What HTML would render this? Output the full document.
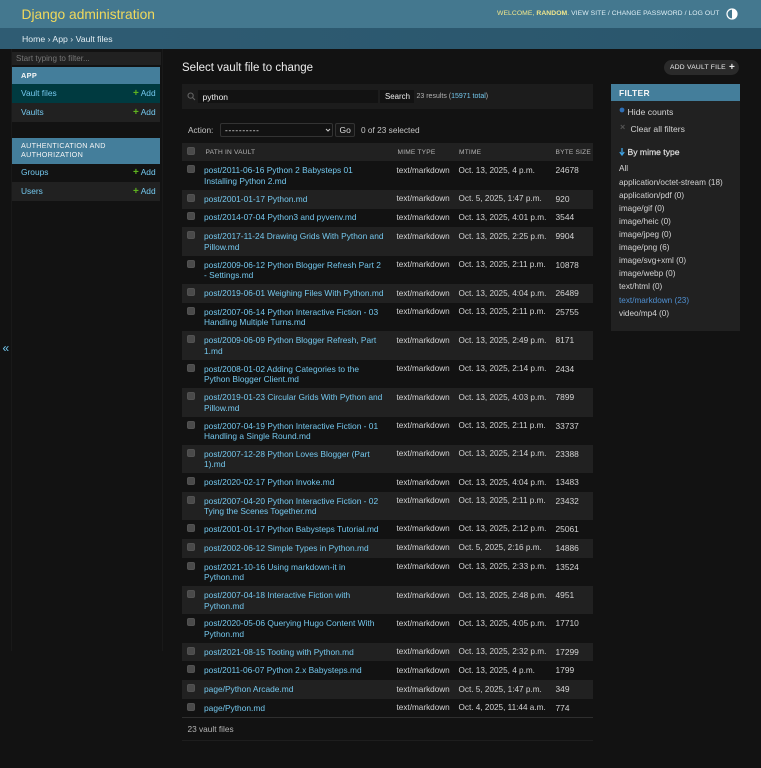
<!DOCTYPE html>
<html><head><meta charset="utf-8"><title>Select vault file to change</title>
<style>
html,body{margin:0;padding:0;background:#121212}
body{width:761px;height:768px;position:relative;overflow:hidden;font-family:"Liberation Sans",sans-serif;font-size:8.4px;color:#eee}
#w{position:absolute;left:0;top:0;width:761px;height:768px;filter:blur(.3px)}
.a{position:absolute;white-space:nowrap}
a{color:#74c8ee;text-decoration:none}
.add{color:#74c8ee}
.plus{color:#5fb41f;font-weight:bold;font-size:10px;line-height:8px}
.cb{position:absolute;left:187px;width:6px;height:6px;background:#4a4a4a;border:1px solid #525252;border-radius:2px;box-sizing:content-box}
.row{position:absolute;left:182px;width:411px}
.row.e{background:#212121}
.row a,.row span{position:absolute;line-height:10.500px}
.p{left:22px;white-space:nowrap;top:4px}
.m{left:214.500px;top:4.500px;color:#d4d4d4;white-space:nowrap;font-size:8.200px}
.t{left:276.500px;top:4.500px;color:#d4d4d4;white-space:nowrap;font-size:8.200px}
.b{left:373.500px;top:4px;color:#d4d4d4;white-space:nowrap}
.row .cb{left:5px;top:4px}
.th{position:absolute;top:148px;font-size:6.600px;color:#b4b4b4;letter-spacing:.2px;white-space:nowrap;line-height:9px}
.f{position:absolute;left:619px;font-size:8.200px;color:#d4d4d4;white-space:nowrap;line-height:10px}
</style></head><body><div id="w">
<div class="a" style="left:0;top:0;width:761px;height:28px;background:#44788f"></div>
<div class="a" style="left:0;top:28px;width:761px;height:21px;background:linear-gradient(90deg,#2f5c73,#2a566c)"></div>
<div class="a" style="left:21.500px;top:6px;font-size:13.800px;line-height:17px;color:#f0d95c">Django administration</div>
<div class="a" style="left:497px;top:9.500px;font-size:6.800px;line-height:8px;letter-spacing:.05px;color:#f0e68c">WELCOME, <b>RANDOM</b>. <span style="color:#ddeef5">VIEW SITE / CHANGE PASSWORD / LOG OUT</span></div>
<svg class="a" style="left:726px;top:8px" width="12" height="12" viewBox="0 0 12 12"><circle cx="6" cy="6" r="5" fill="none" stroke="#fff" stroke-width="1.200"/><path d="M6 1a5 5 0 0 1 0 10z" fill="#fff"/></svg>
<div class="a" style="left:22px;top:34px;font-size:8.700px;line-height:10px;color:#e3eef3">Home › App › Vault files</div>

<div class="a" style="left:11px;top:49px;width:150px;height:602px;border-right:1px solid #191919;border-left:1px solid #191919;box-sizing:content-box"></div>
<div class="a" style="left:12px;top:52px;width:149px;height:13px;background:#212121"></div>
<div class="a" style="left:16px;top:54px;font-size:8.100px;line-height:10px;color:#777">Start typing to filter...</div>
<div class="a" style="left:12px;top:67px;width:148px;height:17px;background:#447e9b"></div>
<div class="a" style="left:21px;top:71px;font-size:7.400px;line-height:9px;letter-spacing:.3px;font-weight:bold;color:#f5f5f5">APP</div>
<div class="a" style="left:12px;top:84px;width:148px;height:19px;background:#003a40"></div>
<div class="a" style="left:12px;top:103px;width:148px;height:19px;background:#212121"></div>
<a class="a" style="left:21px;top:88px;line-height:11px">Vault files</a>
<a class="a" style="left:21px;top:107px;line-height:11px">Vaults</a>
<div class="a" style="left:133px;top:88px;line-height:11px"><span class="plus">+</span> <span class="add">Add</span></div>
<div class="a" style="left:133px;top:107px;line-height:11px"><span class="plus">+</span> <span class="add">Add</span></div>
<div class="a" style="left:12px;top:138px;width:148px;height:26px;background:#447e9b"></div>
<div class="a" style="left:21px;top:142px;font-size:7.200px;line-height:8.500px;letter-spacing:.3px;color:#f5f5f5">AUTHENTICATION AND<br>AUTHORIZATION</div>
<div class="a" style="left:12px;top:182px;width:148px;height:19px;background:#212121"></div>
<a class="a" style="left:21px;top:167px;line-height:11px">Groups</a>
<a class="a" style="left:21px;top:186px;line-height:11px">Users</a>
<div class="a" style="left:133px;top:167px;line-height:11px"><span class="plus">+</span> <span class="add">Add</span></div>
<div class="a" style="left:133px;top:186px;line-height:11px"><span class="plus">+</span> <span class="add">Add</span></div>
<div class="a" style="left:2.500px;top:342px;font-size:12px;line-height:13px;color:#74c8ee">«</div>

<div class="a" style="left:182px;top:60.500px;font-size:11.500px;line-height:15px;color:#ececec">Select vault file to change</div>
<div class="a" style="left:664px;top:60px;width:75px;height:15px;background:#2a2a2a;border-radius:8px"></div>
<div class="a" style="left:670px;top:62.500px;font-size:6.700px;line-height:9px;letter-spacing:.25px;color:#eee">ADD VAULT FILE</div>
<div class="a" style="left:729px;top:60.500px;font-size:10px;line-height:13px;font-weight:bold;color:#eee">+</div>

<div class="a" style="left:182px;top:84px;width:411px;height:25px;background:#1c1c1c"></div>
<svg class="a" style="left:187px;top:92px" width="9" height="9" viewBox="0 0 9 9"><circle cx="3.600" cy="3.600" r="2.600" fill="none" stroke="#666" stroke-width="1"/><path d="M5.600 5.600L8 8" stroke="#666" stroke-width="1"/></svg>
<div class="a" style="left:198px;top:90px;width:180px;height:13px;background:#121212"></div>
<div class="a" style="left:202.500px;top:92px;font-size:8.500px;line-height:10px;color:#eee">python</div>
<div class="a" style="left:380px;top:90px;width:34px;height:13px;background:#121212"></div>
<div class="a" style="left:385px;top:92px;font-size:7.900px;line-height:10px;color:#eee">Search</div>
<div class="a" style="left:416.500px;top:91.500px;font-size:7px;line-height:9px;color:#b4b4b4">23 results (<span style="color:#74c8ee">15971 total</span>)</div>

<div class="a" style="left:188px;top:125px;font-size:8.300px;line-height:10px;color:#c4c4c4">Action:</div>
<div class="a" style="left:220px;top:123px;width:113px;height:14px;background:#121212;border:1px solid #333;border-radius:2px;box-sizing:border-box"></div>
<div class="a" style="left:225px;top:125px;font-size:8.300px;line-height:10px;letter-spacing:.7px;color:#eee">----------</div>
<svg class="a" style="left:325px;top:128px" width="6" height="5" viewBox="0 0 6 5"><path d="M1 1l2 2 2-2" fill="none" stroke="#ccc" stroke-width="1"/></svg>
<div class="a" style="left:335px;top:123px;width:20px;height:14px;background:#161616;border:1px solid #333;border-radius:2px;box-sizing:border-box"></div>
<div class="a" style="left:339.500px;top:125px;font-size:8.500px;line-height:10px;color:#ddd">Go</div>
<div class="a" style="left:361px;top:125px;font-size:8.300px;line-height:10px;color:#c4c4c4">0 of 23 selected</div>

<div class="a" style="left:182px;top:143px;width:411px;height:18px;background:#212121"></div>
<div class="cb" style="top:147px"></div>
<div class="th" style="left:205.500px">PATH IN VAULT</div>
<div class="th" style="left:397.500px">MIME TYPE</div>
<div class="th" style="left:459px">MTIME</div>
<div class="th" style="left:555.500px">BYTE SIZE</div>

<div class="row" style="top:161px;height:28.500px"><i class="cb"></i><a class="p">post/2011-06-16 Python 2 Babysteps 01<br>Installing Python 2.md</a><span class="m">text/markdown</span><span class="t">Oct. 13, 2025, 4 p.m.</span><span class="b">24678</span></div>
<div class="row e" style="top:189.500px;height:19px"><i class="cb"></i><a class="p">post/2001-01-17 Python.md</a><span class="m">text/markdown</span><span class="t">Oct. 5, 2025, 1:47 p.m.</span><span class="b">920</span></div>
<div class="row" style="top:208px;height:19px"><i class="cb"></i><a class="p">post/2014-07-04 Python3 and pyvenv.md</a><span class="m">text/markdown</span><span class="t">Oct. 13, 2025, 4:01 p.m.</span><span class="b">3544</span></div>
<div class="row e" style="top:227px;height:28.500px"><i class="cb"></i><a class="p">post/2017-11-24 Drawing Grids With Python and<br>Pillow.md</a><span class="m">text/markdown</span><span class="t">Oct. 13, 2025, 2:25 p.m.</span><span class="b">9904</span></div>
<div class="row" style="top:255.500px;height:28.500px"><i class="cb"></i><a class="p">post/2009-06-12 Python Blogger Refresh Part 2<br>- Settings.md</a><span class="m">text/markdown</span><span class="t">Oct. 13, 2025, 2:11 p.m.</span><span class="b">10878</span></div>
<div class="row e" style="top:284px;height:18.500px"><i class="cb"></i><a class="p">post/2019-06-01 Weighing Files With Python.md</a><span class="m">text/markdown</span><span class="t">Oct. 13, 2025, 4:04 p.m.</span><span class="b">26489</span></div>
<div class="row" style="top:302.500px;height:28.500px"><i class="cb"></i><a class="p">post/2007-06-14 Python Interactive Fiction - 03<br>Handling Multiple Turns.md</a><span class="m">text/markdown</span><span class="t">Oct. 13, 2025, 2:11 p.m.</span><span class="b">25755</span></div>
<div class="row e" style="top:331px;height:28.500px"><i class="cb"></i><a class="p">post/2009-06-09 Python Blogger Refresh, Part<br>1.md</a><span class="m">text/markdown</span><span class="t">Oct. 13, 2025, 2:49 p.m.</span><span class="b">8171</span></div>
<div class="row" style="top:359.500px;height:28.500px"><i class="cb"></i><a class="p">post/2008-01-02 Adding Categories to the<br>Python Blogger Client.md</a><span class="m">text/markdown</span><span class="t">Oct. 13, 2025, 2:14 p.m.</span><span class="b">2434</span></div>
<div class="row e" style="top:388px;height:28.500px"><i class="cb"></i><a class="p">post/2019-01-23 Circular Grids With Python and<br>Pillow.md</a><span class="m">text/markdown</span><span class="t">Oct. 13, 2025, 4:03 p.m.</span><span class="b">7899</span></div>
<div class="row" style="top:416.500px;height:28px"><i class="cb"></i><a class="p">post/2007-04-19 Python Interactive Fiction - 01<br>Handling a Single Round.md</a><span class="m">text/markdown</span><span class="t">Oct. 13, 2025, 2:11 p.m.</span><span class="b">33737</span></div>
<div class="row e" style="top:444.500px;height:28.500px"><i class="cb"></i><a class="p">post/2007-12-28 Python Loves Blogger (Part<br>1).md</a><span class="m">text/markdown</span><span class="t">Oct. 13, 2025, 2:14 p.m.</span><span class="b">23388</span></div>
<div class="row" style="top:473px;height:18.500px"><i class="cb"></i><a class="p">post/2020-02-17 Python Invoke.md</a><span class="m">text/markdown</span><span class="t">Oct. 13, 2025, 4:04 p.m.</span><span class="b">13483</span></div>
<div class="row e" style="top:491.500px;height:28px"><i class="cb"></i><a class="p">post/2007-04-20 Python Interactive Fiction - 02<br>Tying the Scenes Together.md</a><span class="m">text/markdown</span><span class="t">Oct. 13, 2025, 2:11 p.m.</span><span class="b">23432</span></div>
<div class="row" style="top:519.500px;height:19px"><i class="cb"></i><a class="p">post/2001-01-17 Python Babysteps Tutorial.md</a><span class="m">text/markdown</span><span class="t">Oct. 13, 2025, 2:12 p.m.</span><span class="b">25061</span></div>
<div class="row e" style="top:538.500px;height:19px"><i class="cb"></i><a class="p">post/2002-06-12 Simple Types in Python.md</a><span class="m">text/markdown</span><span class="t">Oct. 5, 2025, 2:16 p.m.</span><span class="b">14886</span></div>
<div class="row" style="top:557.500px;height:28.500px"><i class="cb"></i><a class="p">post/2021-10-16 Using markdown-it in<br>Python.md</a><span class="m">text/markdown</span><span class="t">Oct. 13, 2025, 2:33 p.m.</span><span class="b">13524</span></div>
<div class="row e" style="top:586px;height:28px"><i class="cb"></i><a class="p">post/2007-04-18 Interactive Fiction with<br>Python.md</a><span class="m">text/markdown</span><span class="t">Oct. 13, 2025, 2:48 p.m.</span><span class="b">4951</span></div>
<div class="row" style="top:614px;height:28.500px"><i class="cb"></i><a class="p">post/2020-05-06 Querying Hugo Content With<br>Python.md</a><span class="m">text/markdown</span><span class="t">Oct. 13, 2025, 4:05 p.m.</span><span class="b">17710</span></div>
<div class="row e" style="top:642.500px;height:18.500px"><i class="cb"></i><a class="p">post/2021-08-15 Tooting with Python.md</a><span class="m">text/markdown</span><span class="t">Oct. 13, 2025, 2:32 p.m.</span><span class="b">17299</span></div>
<div class="row" style="top:661px;height:19px"><i class="cb"></i><a class="p">post/2011-06-07 Python 2.x Babysteps.md</a><span class="m">text/markdown</span><span class="t">Oct. 13, 2025, 4 p.m.</span><span class="b">1799</span></div>
<div class="row e" style="top:680px;height:19px"><i class="cb"></i><a class="p">page/Python Arcade.md</a><span class="m">text/markdown</span><span class="t">Oct. 5, 2025, 1:47 p.m.</span><span class="b">349</span></div>
<div class="row" style="top:698.500px;height:18.500px"><i class="cb"></i><a class="p">page/Python.md</a><span class="m">text/markdown</span><span class="t">Oct. 4, 2025, 11:44 a.m.</span><span class="b">774</span></div>
<div class="a" style="left:182px;top:717px;width:411px;height:1px;background:#2e2e2e"></div>
<div class="a" style="left:187.500px;top:724px;font-size:8.300px;line-height:10px;color:#b4b4b4">23 vault files</div>
<div class="a" style="left:182px;top:740px;width:411px;height:1px;background:#1e1e1e"></div>

<div class="a" style="left:611px;top:84px;width:129px;height:247px;background:#212121"></div>
<div class="a" style="left:611px;top:84px;width:129px;height:17px;background:#447e9b"></div>
<div class="a" style="left:619px;top:88px;font-size:8.500px;line-height:10px;font-weight:bold;letter-spacing:.3px;color:#f5f5f5">FILTER</div>
<svg class="a" style="left:619px;top:107px" width="6" height="6" viewBox="0 0 6 6"><circle cx="3" cy="3" r="2.400" fill="#2f6fb5"/></svg>
<div class="a" style="left:627.500px;top:107px;font-size:8.700px;line-height:10px;color:#d4d4d4">Hide counts</div>
<div class="a" style="left:620px;top:123px;font-size:9px;line-height:9px;color:#555;font-weight:bold">×</div>
<div class="a" style="left:630.500px;top:124px;font-size:8.600px;line-height:10px;color:#d4d4d4">Clear all filters</div>
<svg class="a" style="left:619px;top:148px" width="6" height="8" viewBox="0 0 6 8"><path d="M3 0v6M.8 4L3 7l2.200-3" fill="none" stroke="#3ea0e0" stroke-width="1.300"/></svg>
<div class="a" style="left:627.500px;top:147px;font-size:8.600px;line-height:10px;color:#e0e0e0;-webkit-text-stroke:.2px #e0e0e0">By mime type</div>
<div class="f" style="top:163.500px">All</div>
<div class="f" style="top:177.500px">application/octet-stream (18)</div>
<div class="f" style="top:190.500px">application/pdf (0)</div>
<div class="f" style="top:203.500px">image/gif (0)</div>
<div class="f" style="top:216.500px">image/heic (0)</div>
<div class="f" style="top:229.500px">image/jpeg (0)</div>
<div class="f" style="top:242.500px">image/png (6)</div>
<div class="f" style="top:256px">image/svg+xml (0)</div>
<div class="f" style="top:269px">image/webp (0)</div>
<div class="f" style="top:282px">text/html (0)</div>
<div class="f" style="top:295.500px;color:#4f8fd0">text/markdown (23)</div>
<div class="f" style="top:308.500px">video/mp4 (0)</div>
</div></body></html>
